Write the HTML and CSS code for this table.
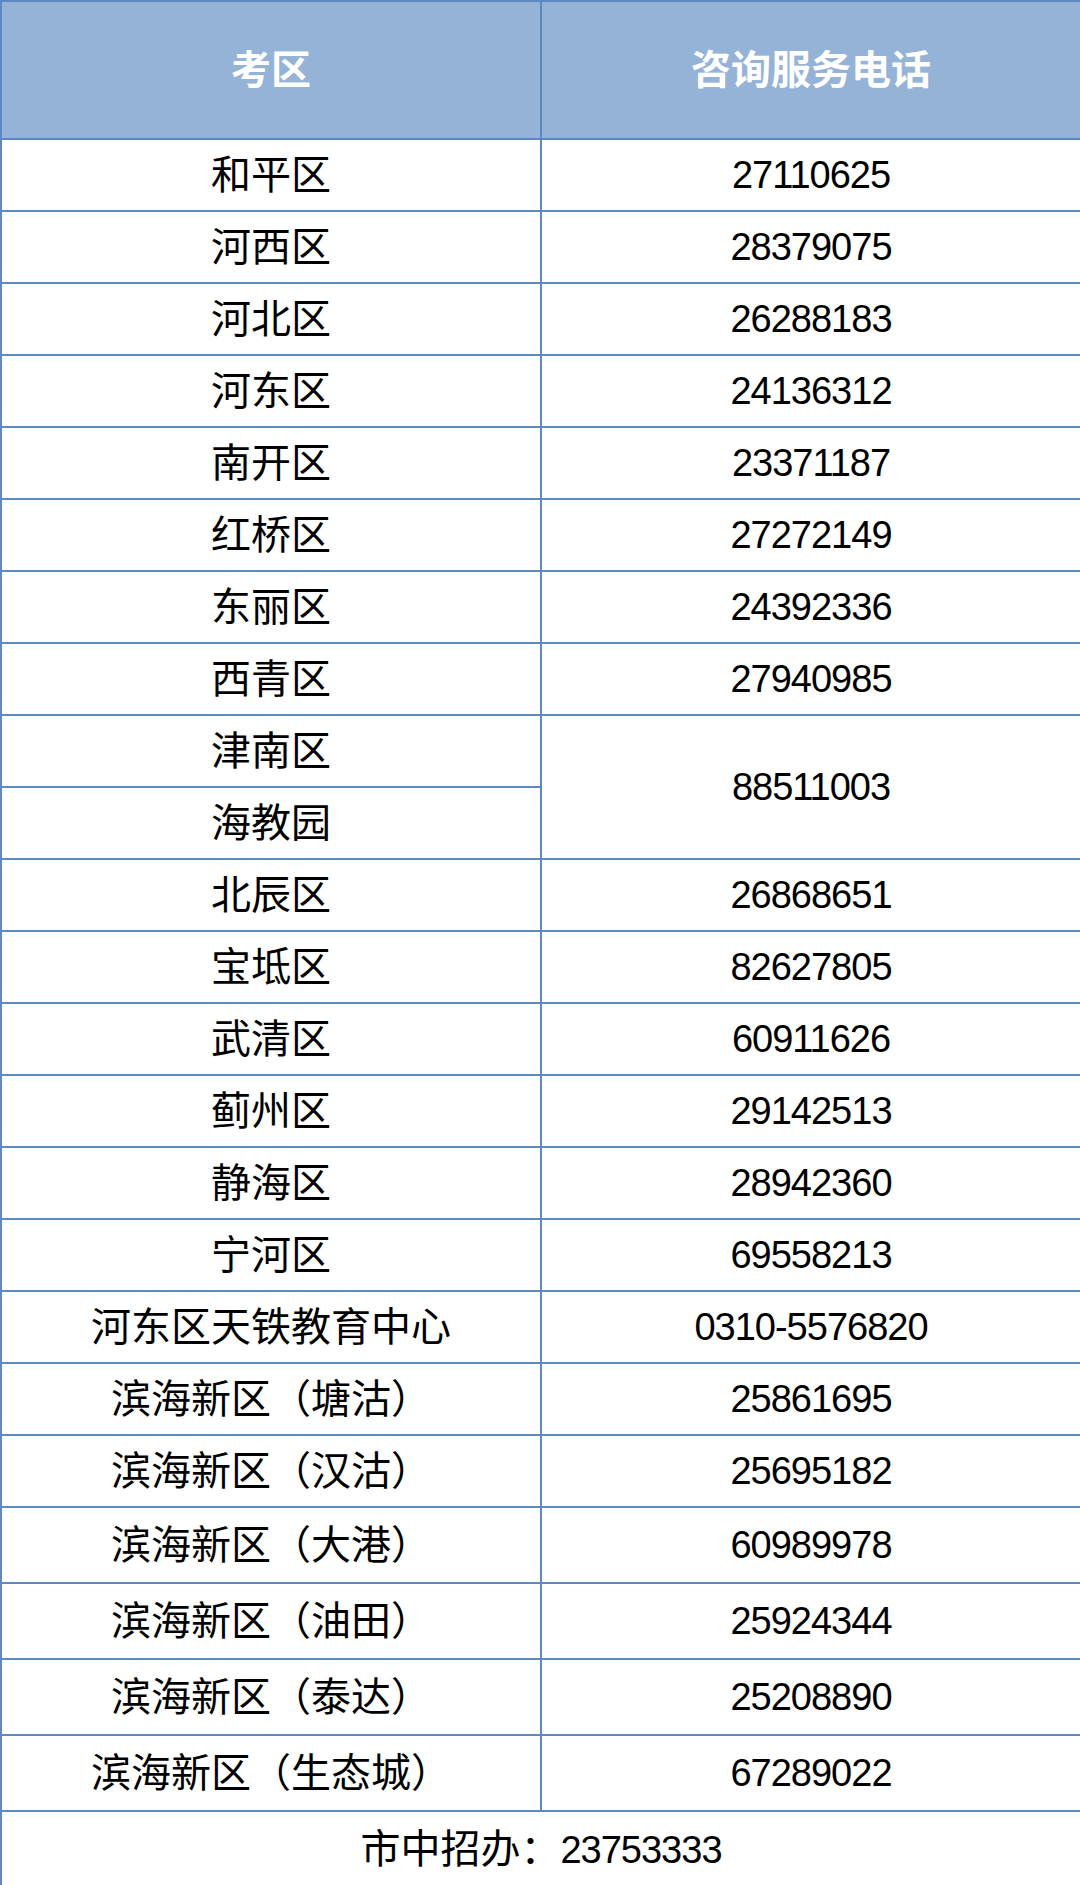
FILE: index.html
```html
<!DOCTYPE html>
<html lang="zh-CN">
<head>
<meta charset="utf-8">
<title>考区咨询服务电话</title>
<link rel="stylesheet" href="styles.css">
</head>
<body>
<table class="phones">
  <colgroup><col class="c1"><col class="c2"></colgroup>
  <thead>
    <tr class="head"><th>考区</th><th>咨询服务电话</th></tr>
  </thead>
  <tbody>
    <tr class="r"><td>和平区</td><td class="num">27110625</td></tr>
    <tr class="r"><td>河西区</td><td class="num">28379075</td></tr>
    <tr class="r"><td>河北区</td><td class="num">26288183</td></tr>
    <tr class="r"><td>河东区</td><td class="num">24136312</td></tr>
    <tr class="r"><td>南开区</td><td class="num">23371187</td></tr>
    <tr class="r"><td>红桥区</td><td class="num">27272149</td></tr>
    <tr class="r"><td>东丽区</td><td class="num">24392336</td></tr>
    <tr class="r"><td>西青区</td><td class="num">27940985</td></tr>
    <tr class="r"><td>津南区</td><td class="num" rowspan="2">88511003</td></tr>
    <tr class="r"><td>海教园</td></tr>
    <tr class="r"><td>北辰区</td><td class="num">26868651</td></tr>
    <tr class="r"><td>宝坻区</td><td class="num">82627805</td></tr>
    <tr class="r"><td>武清区</td><td class="num">60911626</td></tr>
    <tr class="r"><td>蓟州区</td><td class="num">29142513</td></tr>
    <tr class="r"><td>静海区</td><td class="num">28942360</td></tr>
    <tr class="r"><td>宁河区</td><td class="num">69558213</td></tr>
    <tr class="r"><td>河东区天铁教育中心</td><td class="num">0310-5576820</td></tr>
    <tr class="r"><td>滨海新区（塘沽）</td><td class="num">25861695</td></tr>
    <tr class="r"><td>滨海新区（汉沽）</td><td class="num">25695182</td></tr>
    <tr class="r tall"><td>滨海新区（大港）</td><td class="num">60989978</td></tr>
    <tr class="r tall"><td>滨海新区（油田）</td><td class="num">25924344</td></tr>
    <tr class="r tall"><td>滨海新区（泰达）</td><td class="num">25208890</td></tr>
    <tr class="r tall"><td>滨海新区（生态城）</td><td class="num">67289022</td></tr>
    <tr class="foot"><td colspan="2">市中招办：<span class="digits">23753333</span></td></tr>
  </tbody>
</table>
</body>
</html>
```
FILE: styles.css
```css
html, body {
  margin: 0;
  padding: 0;
  background: #ffffff;
}

.phones {
  width: 1080px;
  border-collapse: collapse;
  table-layout: fixed;
  font-family: "Liberation Sans", "Noto Sans CJK SC", sans-serif;
  color: #000000;
}

.c1, .c2 {
  width: 540px;
}

.phones th,
.phones td {
  border: 2px solid #5d88c2;
  padding: 0;
  text-align: center;
  vertical-align: middle;
  font-size: 40px;
  font-weight: normal;
  line-height: 1;
}

.head th {
  height: 136px;
  background: #95b3d7;
  color: #ffffff;
  font-weight: bold;
  font-size: 40px;
}

.r td {
  height: 70px;
}

.r.tall td {
  height: 74px;
}

.foot td {
  height: 73px;
}

.phones td.num,
.digits {
  font-size: 38px;
  letter-spacing: -1px;
}
```
